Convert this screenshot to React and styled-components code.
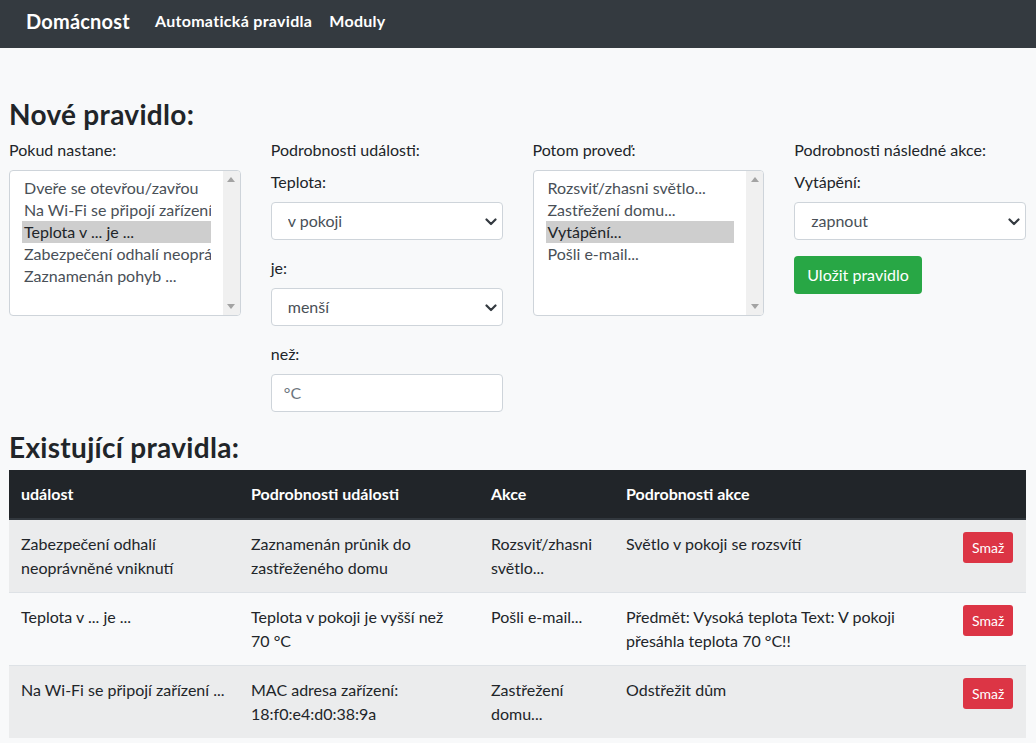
import React, { useState } from 'react';
import styled, { createGlobalStyle } from 'styled-components';

const GlobalStyle = createGlobalStyle`
	* { box-sizing: border-box; }
	body {
		margin: 0;
		background: #f8f9fa;
		color: #212529;
		font-family: Lato, "Liberation Sans", sans-serif;
		font-size: 16px;
		line-height: 1.5;
	}
`;

const NavBar = styled.nav`
	display: flex;
	align-items: center;
	height: 48px;
	padding: 0 26px 6px;
	background: #343a40;
`;

const Brand = styled.a`
	color: #fff;
	font-size: 20px;
	font-weight: 700;
	letter-spacing: 0.2px;
	margin-right: 25px;
`;

const NavLink = styled.a`
	color: #fff;
	font-size: 16px;
	font-weight: 700;
	letter-spacing: 0.3px;
	margin-right: 17px;
`;

const Main = styled.main`
	padding: 50px 10px 5px 9px;
`;

const Heading = styled.h2`
	margin: 0 0 6px;
	font-size: 28px;
	font-weight: 700;
	letter-spacing: 0.3px;
	line-height: 1.2;
	color: #212529;
`;

const FormGrid = styled.div`
	display: grid;
	grid-template-columns: repeat(4, minmax(0, 1fr));
	column-gap: 30px;
	margin-bottom: 3px;
`;

const Column = styled.div`
	display: flex;
	flex-direction: column;
	min-width: 0;
`;

const Label = styled.label`
	display: block;
	margin-bottom: 8px;
	color: #212529;
	white-space: nowrap;
`;

const Group = styled.div`
	margin-bottom: 16px;
`;

const ListBox = styled.div`
	display: flex;
	height: 146px;
	background: #fff;
	border: 1px solid #ced4da;
	border-radius: 4px;
	overflow: hidden;
`;

const ListOptions = styled.ul`
	flex: 1;
	min-width: 0;
	margin: 0;
	padding: 6px 12px;
	list-style: none;
`;

const ListOption = styled.li`
	height: 22px;
	line-height: 22px;
	padding: 0 2px;
	white-space: nowrap;
	overflow: hidden;
	color: ${p => (p.$selected ? '#212529' : '#495057')};
	background: ${p => (p.$selected ? '#cecece' : 'transparent')};
`;

const ScrollTrack = styled.div`
	display: flex;
	flex-direction: column;
	justify-content: space-between;
	align-items: center;
	width: 17px;
	padding: 6px 0;
	background: #f0f0f0;
`;

const SelectWrap = styled.div`
	position: relative;
`;

const Select = styled.select`
	display: block;
	width: 100%;
	height: 38px;
	padding: 6px 32px 6px 16px;
	font-family: inherit;
	font-size: 16px;
	color: #495057;
	background: #fff;
	border: 1px solid #ced4da;
	border-radius: 4px;
	appearance: none;
	outline: none;
`;

const Chevron = styled.svg`
	position: absolute;
	right: 6px;
	top: 16px;
	pointer-events: none;
`;

const Input = styled.input`
	display: block;
	width: 100%;
	height: 38px;
	padding: 6px 12px;
	font-family: inherit;
	font-size: 16px;
	color: #495057;
	background: #fff;
	border: 1px solid #ced4da;
	border-radius: 4px;
	outline: none;

	&::placeholder {
		color: #6c757d;
	}
`;

const Button = styled.button`
	font-family: inherit;
	color: #fff;
	border: 1px solid transparent;
	background: ${p => (p.$variant === 'danger' ? '#dc3545' : '#28a745')};
	font-size: ${p => (p.$small ? '14px' : '16px')};
	line-height: 1.5;
	padding: ${p => (p.$small ? '4px 8px' : '6px 12px')};
	border-radius: ${p => (p.$small ? '3px' : '4px')};
	cursor: pointer;
`;

const SaveButton = styled(Button)`
	align-self: flex-start;
`;

const Table = styled.table`
	width: 100%;
	border-collapse: collapse;
	table-layout: fixed;
	color: #212529;

	th, td {
		padding: 12px;
		text-align: left;
		vertical-align: top;
	}

	th {
		color: #fff;
		background: #212529;
		font-weight: 700;
		border-bottom: 2px solid #32383e;
	}

	td {
		border-top: 1px solid #dee2e6;
	}

	tbody tr:nth-child(odd) {
		background: rgba(0, 0, 0, 0.05);
	}
`;

const ArrowUp = () => (
	<svg width="8" height="5" viewBox="0 0 8 5"><path d="M0 5 L4 0 L8 5 Z" fill="#a3a3a3" /></svg>
);

const ArrowDown = () => (
	<svg width="8" height="5" viewBox="0 0 8 5"><path d="M0 0 L4 5 L8 0 Z" fill="#a3a3a3" /></svg>
);

const ChevronIcon = () => (
	<Chevron width="12" height="8" viewBox="0 0 12 8">
		<path d="M1.5 1.5 L6 6 L10.5 1.5" fill="none" stroke="#343a40" strokeWidth="2.2" strokeLinecap="round" strokeLinejoin="round" />
	</Chevron>
);

const List = ({ items, selected }) => (
	<ListBox>
		<ListOptions>
			{items.map((item, i) => (
				<ListOption key={item} $selected={i === selected}>{item}</ListOption>
			))}
		</ListOptions>
		<ScrollTrack>
			<ArrowUp />
			<ArrowDown />
		</ScrollTrack>
	</ListBox>
);

const DropDown = ({ value }) => (
	<SelectWrap>
		<Select defaultValue={value}>
			<option>{value}</option>
		</Select>
		<ChevronIcon />
	</SelectWrap>
);

const events = [
	'Dveře se otevřou/zavřou',
	'Na Wi-Fi se připojí zařízení ...',
	'Teplota v ... je ...',
	'Zabezpečení odhalí neoprávněné vniknutí',
	'Zaznamenán pohyb ...',
];

const actions = [
	'Rozsviť/zhasni světlo...',
	'Zastřežení domu...',
	'Vytápění...',
	'Pošli e-mail...',
];

const rules = [
	['Zabezpečení odhalí neoprávněné vniknutí', 'Zaznamenán průnik do zastřeženého domu', 'Rozsviť/zhasni světlo...', 'Světlo v pokoji se rozsvítí'],
	['Teplota v ... je ...', 'Teplota v pokoji je vyšší než 70\u00a0°C', 'Pošli e-mail...', 'Předmět: Vysoká teplota Text: V pokoji přesáhla teplota 70\u00a0°C!!'],
	['Na Wi-Fi se připojí zařízení ...', 'MAC adresa zařízení: 18:f0:e4:d0:38:9a', 'Zastřežení domu...', 'Odstřežit dům'],
];

const App = () => {
	const [items, setItems] = useState(rules);

	return (
		<>
			<GlobalStyle />
			<NavBar>
				<Brand>Domácnost</Brand>
				<NavLink>Automatická pravidla</NavLink>
				<NavLink>Moduly</NavLink>
			</NavBar>
			<Main>
				<Heading>Nové pravidlo:</Heading>
				<FormGrid>
					<Column>
						<Label>Pokud nastane:</Label>
						<List items={events} selected={2} />
					</Column>
					<Column>
						<Label>Podrobnosti události:</Label>
						<Group>
							<Label>Teplota:</Label>
							<DropDown value="v pokoji" />
						</Group>
						<Group>
							<Label>je:</Label>
							<DropDown value="menší" />
						</Group>
						<Group>
							<Label>než:</Label>
							<Input placeholder="°C" />
						</Group>
					</Column>
					<Column>
						<Label>Potom proveď:</Label>
						<List items={actions} selected={2} />
					</Column>
					<Column>
						<Label>Podrobnosti následné akce:</Label>
						<Group>
							<Label>Vytápění:</Label>
							<DropDown value="zapnout" />
						</Group>
						<SaveButton>Uložit pravidlo</SaveButton>
					</Column>
				</FormGrid>
				<Heading>Existující pravidla:</Heading>
				<Table>
					<colgroup>
						<col style={{ width: 230 }} />
						<col style={{ width: 240 }} />
						<col style={{ width: 135 }} />
						<col />
						<col style={{ width: 75 }} />
					</colgroup>
					<thead>
						<tr>
							<th>událost</th>
							<th>Podrobnosti události</th>
							<th>Akce</th>
							<th>Podrobnosti akce</th>
							<th></th>
						</tr>
					</thead>
					<tbody>
						{items.map((row, i) => (
							<tr key={i}>
								{row.map((cell, j) => <td key={j}>{cell}</td>)}
								<td>
									<Button $variant="danger" $small onClick={() => setItems(items.filter((_, k) => k !== i))}>Smaž</Button>
								</td>
							</tr>
						))}
					</tbody>
				</Table>
			</Main>
		</>
	);
};

export default App;
